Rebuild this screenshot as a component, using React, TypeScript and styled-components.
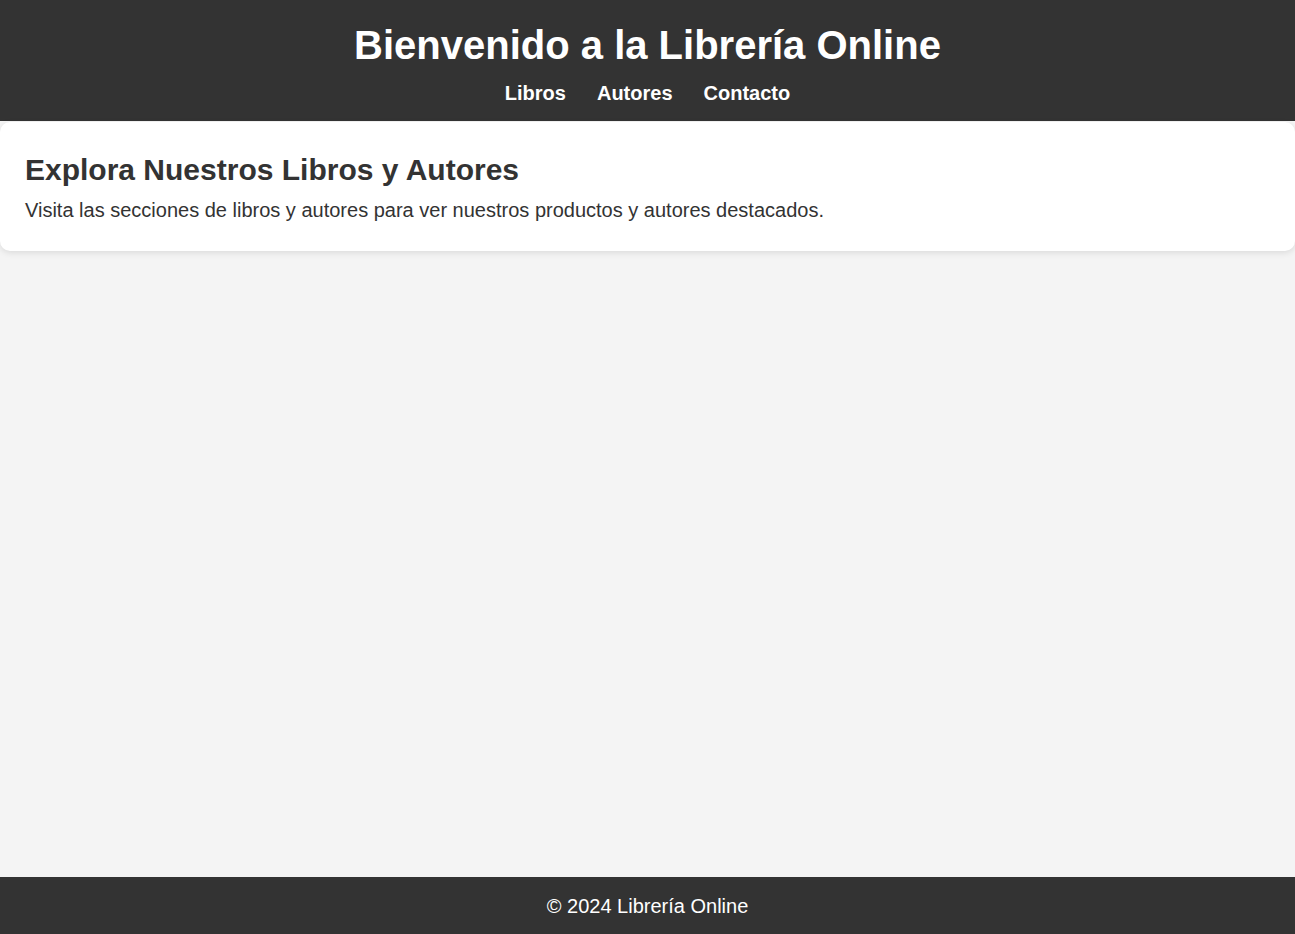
import React from "react";
import styled, { createGlobalStyle } from "styled-components";

const Global = createGlobalStyle`
  html, body { margin: 0; padding: 0; }
  body {
    font-family: "Liberation Sans", Arial, sans-serif;
    background: #f4f4f4;
    color: #333;
  }
`;

const Page = styled.div`
  min-height: 934px;
  display: flex;
  flex-direction: column;
`;

const Header = styled.header`
  background: #333;
  color: #fff;
  padding: 23px 0 16px;
  text-align: center;
`;

const Title = styled.h1`
  margin: 0 0 14px;
  font-size: 40px;
  font-weight: bold;
`;

const Nav = styled.nav`
  display: flex;
  justify-content: center;
  gap: 31px;
`;

const NavLink = styled.a`
  color: #fff;
  text-decoration: none;
  font-weight: bold;
  font-size: 20px;
`;

const Main = styled.main`
  flex: 1;
  padding-top: 1px;
`;

const Card = styled.section`
  background: #fff;
  border-radius: 10px;
  box-shadow: 0 2px 6px rgba(0, 0, 0, 0.1);
  padding: 31px 25px 29px;
`;

const Heading = styled.h2`
  margin: 0 0 12px;
  font-size: 30px;
  font-weight: bold;
  color: #333;
`;

const Text = styled.p`
  margin: 0;
  font-size: 20px;
  color: #333;
`;

const Footer = styled.footer`
  background: #333;
  color: #fff;
  text-align: center;
  font-size: 20px;
  padding: 18px 0 16px;
`;

export default function App() {
  return (
    <Page>
      <Global />
      <Header>
        <Title>Bienvenido a la Librería Online</Title>
        <Nav>
          <NavLink href="#">Libros</NavLink>
          <NavLink href="#">Autores</NavLink>
          <NavLink href="#">Contacto</NavLink>
        </Nav>
      </Header>
      <Main>
        <Card>
          <Heading>Explora Nuestros Libros y Autores</Heading>
          <Text>
            Visita las secciones de libros y autores para ver nuestros productos y autores destacados.
          </Text>
        </Card>
      </Main>
      <Footer>© 2024 Librería Online</Footer>
    </Page>
  );
}
